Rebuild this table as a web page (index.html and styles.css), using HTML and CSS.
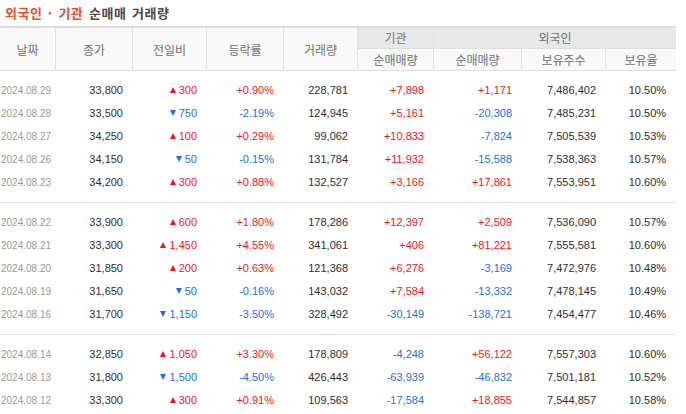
FILE: index.html
```html
<!DOCTYPE html>
<html lang="ko">
<head>
<meta charset="utf-8">
<title>외국인 · 기관 순매매 거래량</title>
<link rel="stylesheet" href="styles.css">
</head>
<body>
<h2 class="title"><span class="title-accent">외국인 · 기관</span> 순매매 거래량</h2>
<table class="trade">
  <colgroup>
    <col class="c-date"><col class="c-close"><col class="c-diff"><col class="c-rate"><col class="c-vol">
    <col class="c-inst"><col class="c-frn"><col class="c-hold"><col class="c-ratio">
  </colgroup>
  <thead>
    <tr>
      <th rowspan="2">날짜</th>
      <th rowspan="2">종가</th>
      <th rowspan="2">전일비</th>
      <th rowspan="2">등락률</th>
      <th rowspan="2">거래량</th>
      <th class="grp">기관</th>
      <th class="grp last" colspan="3">외국인</th>
    </tr>
    <tr>
      <th class="sub">순매매량</th>
      <th class="sub">순매매량</th>
      <th class="sub">보유주수</th>
      <th class="sub last">보유율</th>
    </tr>
  </thead>
  <tbody>
    <tr><td class="date">2024.08.29</td><td>33,800</td><td class="up"><i class="tri-up"></i>300</td><td class="up">+0.90%</td><td>228,781</td><td class="up">+7,898</td><td class="up">+1,171</td><td>7,486,402</td><td>10.50%</td></tr>
    <tr><td class="date">2024.08.28</td><td>33,500</td><td class="down"><i class="tri-down"></i>750</td><td class="down">-2.19%</td><td>124,945</td><td class="up">+5,161</td><td class="down">-20,308</td><td>7,485,231</td><td>10.50%</td></tr>
    <tr><td class="date">2024.08.27</td><td>34,250</td><td class="up"><i class="tri-up"></i>100</td><td class="up">+0.29%</td><td>99,062</td><td class="up">+10,833</td><td class="down">-7,824</td><td>7,505,539</td><td>10.53%</td></tr>
    <tr><td class="date">2024.08.26</td><td>34,150</td><td class="down"><i class="tri-down"></i>50</td><td class="down">-0.15%</td><td>131,784</td><td class="up">+11,932</td><td class="down">-15,588</td><td>7,538,363</td><td>10.57%</td></tr>
    <tr><td class="date">2024.08.23</td><td>34,200</td><td class="up"><i class="tri-up"></i>300</td><td class="up">+0.88%</td><td>132,527</td><td class="up">+3,166</td><td class="up">+17,861</td><td>7,553,951</td><td>10.60%</td></tr>
  </tbody>
  <tbody>
    <tr><td class="date">2024.08.22</td><td>33,900</td><td class="up"><i class="tri-up"></i>600</td><td class="up">+1.80%</td><td>178,286</td><td class="up">+12,397</td><td class="up">+2,509</td><td>7,536,090</td><td>10.57%</td></tr>
    <tr><td class="date">2024.08.21</td><td>33,300</td><td class="up"><i class="tri-up"></i>1,450</td><td class="up">+4.55%</td><td>341,061</td><td class="up">+406</td><td class="up">+81,221</td><td>7,555,581</td><td>10.60%</td></tr>
    <tr><td class="date">2024.08.20</td><td>31,850</td><td class="up"><i class="tri-up"></i>200</td><td class="up">+0.63%</td><td>121,368</td><td class="up">+6,276</td><td class="down">-3,169</td><td>7,472,976</td><td>10.48%</td></tr>
    <tr><td class="date">2024.08.19</td><td>31,650</td><td class="down"><i class="tri-down"></i>50</td><td class="down">-0.16%</td><td>143,032</td><td class="up">+7,584</td><td class="down">-13,332</td><td>7,478,145</td><td>10.49%</td></tr>
    <tr><td class="date">2024.08.16</td><td>31,700</td><td class="down"><i class="tri-down"></i>1,150</td><td class="down">-3.50%</td><td>328,492</td><td class="down">-30,149</td><td class="down">-138,721</td><td>7,454,477</td><td>10.46%</td></tr>
  </tbody>
  <tbody>
    <tr><td class="date">2024.08.14</td><td>32,850</td><td class="up"><i class="tri-up"></i>1,050</td><td class="up">+3.30%</td><td>178,809</td><td class="down">-4,248</td><td class="up">+56,122</td><td>7,557,303</td><td>10.60%</td></tr>
    <tr><td class="date">2024.08.13</td><td>31,800</td><td class="down"><i class="tri-down"></i>1,500</td><td class="down">-4.50%</td><td>426,443</td><td class="down">-63,939</td><td class="down">-46,832</td><td>7,501,181</td><td>10.52%</td></tr>
    <tr><td class="date">2024.08.12</td><td>33,300</td><td class="up"><i class="tri-up"></i>300</td><td class="up">+0.91%</td><td>109,563</td><td class="down">-17,584</td><td class="up">+18,855</td><td>7,544,857</td><td>10.58%</td></tr>
  </tbody>
</table>
</body>
</html>
```
FILE: styles.css
```css
html, body {
  margin: 0;
  padding: 0;
  background: #fff;
}
body {
  font-family: "Liberation Sans", Arial, "Noto Sans CJK KR", sans-serif;
  color: #333;
}
.title {
  margin: 0;
  padding-left: 5px;
  height: 26px;
  line-height: 26px;
  font-family: "Noto Sans CJK KR", sans-serif;
  font-size: 13px;
  font-weight: bold;
  letter-spacing: 0.5px;
  word-spacing: 1.5px;
  color: #4a4a4a;
}
.title-accent {
  color: #f04a26;
}
.trade {
  width: 676px;
  table-layout: fixed;
  border-collapse: separate;
  border-spacing: 0;
  border-top: 2px solid #dedede;
}
.c-date { width: 56px; }
.c-close { width: 77px; }
.c-diff { width: 74px; }
.c-rate { width: 77px; }
.c-vol { width: 74px; }
.c-inst { width: 76px; }
.c-frn { width: 88px; }
.c-hold { width: 84px; }
.c-ratio { width: 70px; }

.trade th {
  padding: 0;
  font-family: "Noto Sans CJK KR", sans-serif;
  font-size: 12px;
  font-weight: normal;
  color: #707070;
  background: #f9f9f9;
  border-right: 1px solid #e2e2e2;
  border-bottom: 1px solid #dedede;
  text-align: center;
}
.trade th.last {
  border-right: none;
}
.trade thead tr:first-child th.grp {
  height: 20px;
  line-height: 20px;
  background: #e8e8e8;
}
.trade th.sub {
  height: 21px;
  line-height: 21px;
}
.trade td {
  padding: 0 10px 0 0;
  font-size: 11px;
  line-height: 23px;
  text-align: right;
  white-space: nowrap;
  color: #2e2e2e;
}
.trade tbody + tbody tr:first-child td {
  border-top: 1px solid #e3e3e3;
}
.trade tbody tr:first-child td {
  padding-top: 8px;
}
.trade tbody tr:last-child td {
  padding-bottom: 8px;
}
.trade td.date {
  padding-left: 1px;
  padding-right: 0;
  text-align: left;
  font-size: 10px;
  color: #9a9a9a;
}
.trade td.up {
  color: #f0141e;
}
.trade td.down {
  color: #1e6ee8;
}
.tri-up, .tri-down {
  display: inline-block;
  width: 0;
  height: 0;
  margin-right: 3px;
  border-left: 3.5px solid transparent;
  border-right: 3.5px solid transparent;
  vertical-align: 1px;
}
.tri-up {
  border-bottom: 6px solid #f0141e;
}
.tri-down {
  border-top: 6px solid #1e6ee8;
}
```
